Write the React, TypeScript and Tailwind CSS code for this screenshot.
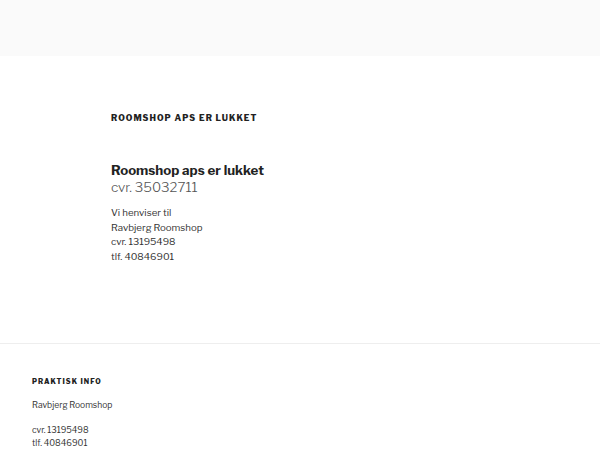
export default function App() {
  return (
    <div className="min-h-[450px] w-full bg-white text-[#333] font-['Libre_Franklin','Inter','Liberation_Sans',sans-serif]">
      <header className="h-[56px] bg-[#fafafa]" />

      <main className="pl-[111px] pr-8">
        <h1 className="pt-[56px] text-[8.5px] font-extrabold uppercase tracking-[0.12em] leading-[12px] text-[#222]">
          Roomshop aps er lukket
        </h1>

        <div className="pt-[38px]">
          <h2 className="text-[13.3px] font-bold leading-[17px] text-[#222]">Roomshop aps er lukket</h2>
          <p className="text-[13.4px] font-light leading-[17px] text-[#555]">cvr. 35032711</p>
          <div className="pt-[10px] text-[9.7px] leading-[14.5px] text-[#333]">
            <p>Vi henviser til</p>
            <p>Ravbjerg Roomshop</p>
            <p>cvr. 13195498</p>
            <p>tlf. 40846901</p>
          </div>
        </div>
      </main>

      <footer className="mt-[79px] border-t border-[#eee] px-8 pt-[33px]">
        <h3 className="text-[7px] font-extrabold uppercase tracking-[0.15em] leading-[10px] text-[#222]">
          Praktisk info
        </h3>
        <div className="pt-[12px] text-[8.5px] leading-[13px] text-[#333]">
          <p>Ravbjerg Roomshop</p>
          <p className="pt-[12px]">cvr. 13195498</p>
          <p>tlf. 40846901</p>
        </div>
      </footer>
    </div>
  );
}
